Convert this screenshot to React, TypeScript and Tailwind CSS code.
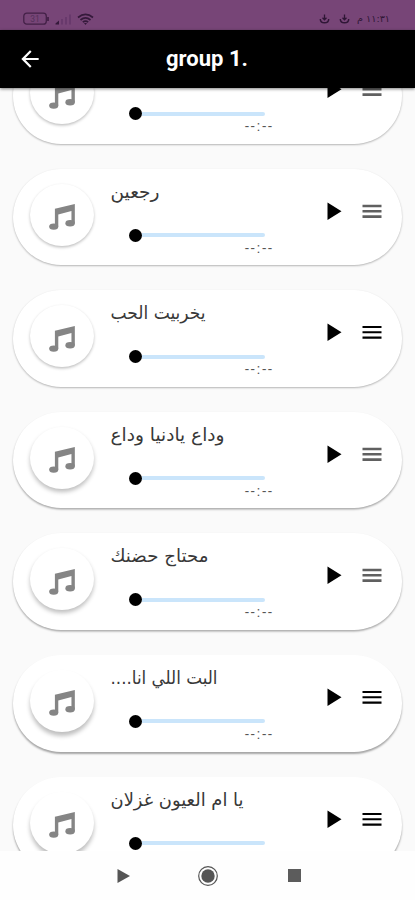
import { clsx } from "clsx";
import { MdArrowBack } from "react-icons/md";

interface Track {
  id: number;
  title: string;
  // rendered width of the title
  width: number;
  time: string;
  handle: "soft" | "sharp";
  shadow: "light" | "medium" | "deep";
}

const tracks: Track[] = [
  { id: 1, title: "", width: 0, time: "--:--", handle: "soft", shadow: "light" },
  { id: 2, title: "رجعين", width: 49, time: "--:--", handle: "soft", shadow: "light" },
  { id: 3, title: "يخربيت الحب", width: 95, time: "--:--", handle: "sharp", shadow: "light" },
  { id: 4, title: "وداع يادنيا وداع", width: 114, time: "--:--", handle: "soft", shadow: "medium" },
  { id: 5, title: "محتاج حضنك", width: 98, time: "--:--", handle: "soft", shadow: "medium" },
  { id: 6, title: "البت اللي انا....", width: 107, time: "--:--", handle: "sharp", shadow: "deep" },
  { id: 7, title: "يا ام العيون غزلان", width: 133, time: "", handle: "sharp", shadow: "deep" },
];

function NoteIcon() {
  return (
    <svg viewBox="0 0 76 77" className="w-[26px] h-[26px] fill-[#858585]">
      <path d="M17 14 L76 0 V57 H66 V21 L27 31 V67 H17 Z" />
      <ellipse cx="13.5" cy="67" rx="13.5" ry="9.5" />
      <ellipse cx="62" cy="57" rx="14" ry="9.5" />
    </svg>
  );
}

function DownloadIcon() {
  return (
    <svg viewBox="0 0 10 10" className="w-[11px] h-[10px]" fill="none" stroke="#2f1636">
      <path d="M5 0.5 V5.5 M3 3.8 L5 5.8 L7 3.8" strokeWidth="1.3" />
      <path d="M0.8 5 Q0.8 8.8 5 8.8 Q9.2 8.8 9.2 5" strokeWidth="1.4" />
    </svg>
  );
}

function StatusBar() {
  return (
    <div className="h-[30px] shrink-0 bg-[#774577] flex items-start justify-between pl-[23px] pr-[25px] pt-[12px]">
      <div className="flex items-center gap-[5px]">
        <svg viewBox="0 0 27 14" className="w-[27px] h-[14px]" fill="none" stroke="#432047">
          <rect x="0.8" y="1.2" width="22.5" height="11" rx="3" strokeWidth="1.3" />
          <path d="M25 5 V9" strokeWidth="1.8" />
          <text
            x="12"
            y="9.8"
            textAnchor="middle"
            fontSize="8.5"
            fill="#54305a"
            stroke="none"
            fontFamily="Roboto, sans-serif"
          >
            31
          </text>
        </svg>
        <svg viewBox="0 0 17 12" className="w-[17px] h-[12px]">
          <path d="M0.5 11.5 V10.5 L4 7.5 V11.5 Z" fill="#35193b" />
          <path d="M6 11.5 V6 H8 V11.5 Z M10 11.5 V4 H12 V11.5 Z M14 11.5 V1.5 H16 V11.5 Z" fill="#68396c" />
        </svg>
        <svg viewBox="0 0 17 13" className="w-[17px] h-[13px]" fill="none" stroke="#35193b" strokeWidth="1.7">
          <path d="M1 4.5 Q8.5 -1.8 16 4.5" />
          <path d="M3.5 7 Q8.5 2.6 13.5 7" />
          <path d="M5.8 9.2 Q8.5 7 11.2 9.2" />
          <path d="M7 10 H10 L8.5 12 Z" fill="#35193b" stroke="none" />
        </svg>
      </div>
      <div className="flex items-center">
        <div className="flex gap-[9px] mr-[6px]">
          <DownloadIcon />
          <DownloadIcon />
        </div>
        <svg viewBox="0 0 34 14" className="w-[34px] h-[14px]">
          <text
            x="34"
            y="10"
            direction="rtl"
            fontSize="9.5"
            fill="#2f1636"
            textLength="33"
            lengthAdjust="spacingAndGlyphs"
            fontFamily="'DejaVu Sans', sans-serif"
          >
            ١١:٣١ م
          </text>
        </svg>
      </div>
    </div>
  );
}

function Header() {
  return (
    <header className="h-[58px] shrink-0 bg-black text-white flex items-center relative z-10 shadow-[0_1px_3px_rgba(0,0,0,0.5)]">
      <button className="w-[60px] flex justify-center">
        <MdArrowBack className="w-[26px] h-[26px]" />
      </button>
      <h1 className="flex-1 mr-[61px] text-center font-[Roboto,sans-serif] font-bold text-[22px] leading-6">
        group 1.
      </h1>
    </header>
  );
}

function TrackCard({ track }: { track: Track }) {
  return (
    <li
      className={clsx(
        "h-[96.6px] shrink-0 mx-[13px] rounded-[48px] bg-white flex",
        track.shadow === "light" && "shadow-[0_1px_2px_rgba(0,0,0,0.28)]",
        track.shadow === "medium" && "shadow-[0_1.5px_2px_rgba(0,0,0,0.32)]",
        track.shadow === "deep" && "shadow-[0_2px_2px_rgba(0,0,0,0.34)]"
      )}
    >
      <div
        className={clsx(
          "w-[64px] h-[62px] ml-[17px] mt-[15px] rounded-[50%] bg-white flex items-center justify-center pt-[5px]",
          track.shadow === "light" && "shadow-[0_1.5px_3px_rgba(0,0,0,0.25)]",
          track.shadow === "medium" && "shadow-[0_3px_4px_rgba(0,0,0,0.25)]",
          track.shadow === "deep" && "shadow-[0_4px_4px_rgba(0,0,0,0.25)]"
        )}
      >
        <NoteIcon />
      </div>

      <div className="w-[179px] shrink-0 ml-[16px] pt-[7px]">
        <svg viewBox="0 0 160 34" className="block w-[160px] h-[34px]">
          {track.title && (
            <text
              x={track.width + 0.5}
              y="22"
              direction="rtl"
              fontSize="18"
              fill="#383838"
              textLength={track.width}
              lengthAdjust="spacingAndGlyphs"
              fontFamily="'DejaVu Sans', sans-serif"
            >
              {track.title}
            </text>
          )}
        </svg>
        <div className="flex items-center ml-[19px] mt-[19px]">
          <div className="w-[13px] h-[13px] rounded-full bg-black" />
          <div className="w-[123px] h-[4px] bg-[#cae5fb] rounded-r-sm" />
        </div>
        {track.time && (
          <p className="ml-[135px] w-[32px] whitespace-nowrap font-[Roboto,sans-serif] text-[14px] leading-[13px] tracking-[2px] text-[#555]">
            {track.time}
          </p>
        )}
      </div>

      <div className="flex items-start pt-[33px] ml-[38px] gap-[20px]">
        <svg viewBox="0 0 15 18" className="w-[15px] h-[18px]">
          <path d="M0.5 0.5 L14.5 9.2 L0.5 18 Z" fill="#000" />
        </svg>
        <svg viewBox="0 0 20 18" className="w-[20px] h-[18px]">
          <path
            d="M0.5 4 H19.5 M0.5 9.3 H19.5 M0.5 14.6 H19.5"
            fill="none"
            stroke={track.handle === "soft" ? "#606060" : "#000"}
            strokeWidth={track.handle === "soft" ? 2.6 : 2.1}
          />
        </svg>
      </div>
    </li>
  );
}

function NavBar() {
  return (
    <nav className="h-[49px] shrink-0 bg-[#fefefe] flex items-center pl-[117px] relative z-10">
      <svg viewBox="0 0 14 16" className="w-[14px] h-[16px]">
        <path d="M0.5 1 L13 8 L0.5 15 Z" fill="#555" />
      </svg>
      <svg viewBox="0 0 22 22" className="w-[22px] h-[22px] ml-[66px]">
        <circle cx="11" cy="11" r="9.3" fill="none" stroke="#555" strokeWidth="1.2" />
        <circle cx="11" cy="11" r="6.7" fill="#555" />
      </svg>
      <div className="w-[13px] h-[13px] ml-[69px] bg-[#5c5c5c]" />
    </nav>
  );
}

export default function App() {
  return (
    <div className="flex flex-col w-full h-screen overflow-hidden bg-[#fafafa]">
      <StatusBar />
      <Header />
      <main className="flex-1 min-h-0 overflow-hidden">
        <ul className="flex flex-col gap-[25px] -mt-[41px]">
          {tracks.map((track) => (
            <TrackCard key={track.id} track={track} />
          ))}
        </ul>
      </main>
      <NavBar />
    </div>
  );
}
